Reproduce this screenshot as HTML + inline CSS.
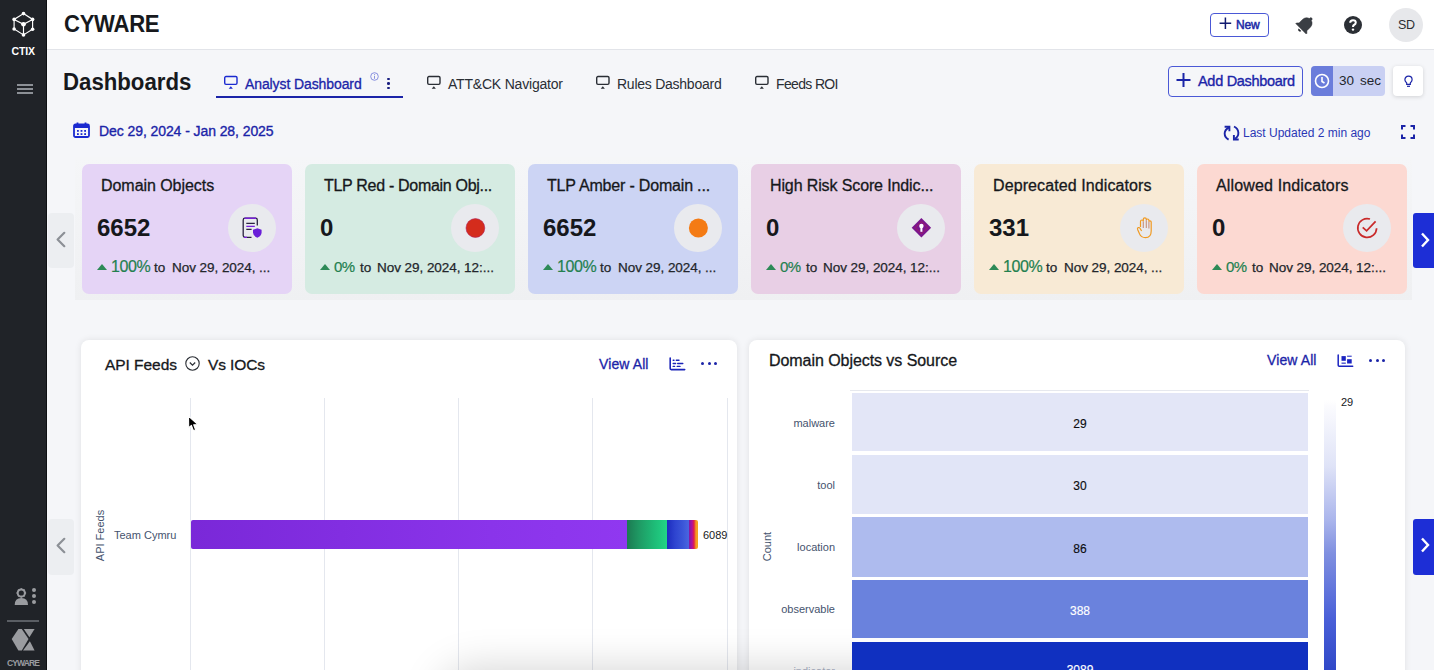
<!DOCTYPE html>
<html><head><meta charset="utf-8">
<style>
*{box-sizing:border-box;margin:0;padding:0}
html,body{width:1434px;height:670px;overflow:hidden;font-family:"Liberation Sans",sans-serif;background:#f5f6f9;color:#1f2328;position:relative}
.a{position:absolute}
.t{position:absolute;white-space:nowrap;line-height:1}
#sidebar{position:absolute;left:0;top:0;width:47px;height:670px;background:#202328;border-right:1px solid #0e1013}
#header{position:absolute;left:47px;top:0;width:1387px;height:50px;background:#fff;border-bottom:1px solid #e2e4e9}
.card{position:absolute;top:164px;width:210px;height:130px;border-radius:7px}
.card .ttl{position:absolute;left:19px;top:14px;font-size:16px;color:#16181c;white-space:nowrap;line-height:1;-webkit-text-stroke:0.3px #16181c}
.card .num{position:absolute;left:15px;top:52px;font-size:24px;font-weight:bold;color:#16181c;line-height:1}
.card .ic{position:absolute;left:146px;top:40px;width:48px;height:48px;border-radius:50%;background:#e9eaee}
.card .ic svg{position:absolute;left:0;top:0}
.card .tri{position:absolute;left:15px;top:100px;width:0;height:0;border-left:5px solid transparent;border-right:5px solid transparent;border-bottom:6px solid #2d8a57}
.card .pct{position:absolute;left:29px;top:95px;font-size:16px;color:#23804f;line-height:1;letter-spacing:-0.4px;white-space:nowrap;-webkit-text-stroke:0.2px #23804f}
.card .to{position:absolute;top:97px;font-size:13.5px;color:#23262b;line-height:1;white-space:nowrap;-webkit-text-stroke:0.25px #23262b}
.card .dt{position:absolute;top:97px;font-size:13.5px;color:#23262b;line-height:1;white-space:nowrap;letter-spacing:-0.05px;-webkit-text-stroke:0.25px #23262b}
.panel{position:absolute;top:340px;height:340px;width:656px;background:#fff;border-radius:8px;box-shadow:0 0 7px rgba(0,0,0,0.09)}
.grid{position:absolute;top:398px;width:1px;height:280px;background:#e4e7ee}
.lbl{position:absolute;font-size:11px;color:#45536e;white-space:nowrap;line-height:1}
.cell{position:absolute;left:852px;width:456px}
.val{position:absolute;left:0;width:456px;text-align:center;font-size:12px;line-height:1;color:#0c0d10;-webkit-text-stroke:0.15px currentColor}
</style></head><body>
<div id="sidebar">
  <svg class="a" style="left:12px;top:11px" width="23" height="26" viewBox="0 0 23 26">
    <g fill="none" stroke="#fff" stroke-width="1.15"><path d="M11.5 2.6 L20.6 8.4 L20.6 18.3 L11.5 23.9 L2.1 18 L2.1 8.4 Z"/><path d="M2.1 8.4 L11.5 13.3 L20.6 8.4 M11.5 13.3 L11.5 23.9"/></g>
    <g fill="#fff"><circle cx="11.5" cy="2.6" r="1.8"/><circle cx="20.6" cy="8.4" r="1.8"/><circle cx="20.6" cy="18.3" r="1.8"/><circle cx="11.5" cy="23.9" r="1.8"/><circle cx="2.1" cy="18" r="1.8"/><circle cx="2.1" cy="8.4" r="1.8"/><circle cx="11.5" cy="13.3" r="2.3"/></g>
  </svg>
  <div class="t" style="left:11.5px;top:46px;font-size:10.5px;font-weight:bold;color:#fff;letter-spacing:-0.1px">CTIX</div>
  <div class="a" style="left:17px;top:84px;width:16px;height:1.6px;background:#8c9096"></div>
  <div class="a" style="left:17px;top:88px;width:16px;height:1.6px;background:#8c9096"></div>
  <div class="a" style="left:17px;top:92px;width:16px;height:1.6px;background:#8c9096"></div>
  <svg class="a" style="left:12px;top:586px" width="26" height="20" viewBox="0 0 26 20">
    <g fill="#9a9ca0"><path d="M2.7 19 Q2.7 12 9.3 12 Q16 12 16 19 Z"/><circle cx="22" cy="4" r="2"/><circle cx="22" cy="10" r="2"/><circle cx="22" cy="16" r="2"/></g>
    <circle cx="9.3" cy="7" r="3.6" fill="none" stroke="#9a9ca0" stroke-width="2"/>
    <g stroke="#9a9ca0" stroke-width="1.5"><path d="M9.3 2.2 V3.5 M9.3 10.5 V11.8 M4.5 7 H5.8 M12.8 7 H14.1 M5.9 3.6 L6.8 4.5 M11.8 9.5 L12.7 10.4 M12.7 3.6 L11.8 4.5 M6.8 9.5 L5.9 10.4"/></g>
  </svg>
  <div class="a" style="left:7px;top:620px;width:32px;height:1.5px;background:#5a5e64"></div>
  <svg class="a" style="left:0;top:620px" width="47" height="40" viewBox="0 620 47 40"><g fill="#9a9ca0"><path d="M11.7 639.1 L18.4 629 L21.8 629 L28.5 639.1 L21.8 650.5 L18.4 650.5 Z"/><path d="M23.8 629 L34.6 629 L29.4 637.3 Z"/><path d="M29.9 641.3 L34.6 650.5 L23 650.5 Z"/></g></svg>
  <div class="t" style="left:7px;top:659px;font-size:8.5px;font-weight:bold;color:#9a9ca0;letter-spacing:-0.9px">CYWARE</div>
</div>

<div id="header">
  <div class="t" style="left:17px;top:13px;font-size:23.5px;font-weight:bold;color:#17191d;letter-spacing:-0.3px;transform:scaleX(0.94);transform-origin:0 0">CYWARE</div>
</div>
<!-- New button -->
<div class="a" style="left:1210px;top:13px;width:59px;height:24px;border:1px solid #4a58d6;border-radius:4px;background:#fff"></div>
<svg class="a" style="left:1218px;top:16px" width="15" height="15" viewBox="0 0 15 15"><path d="M7.4 1.6 V13 M1.6 7.3 H13.2" stroke="#101a70" stroke-width="1.5"/></svg>
<div class="t" style="left:1236px;top:19px;font-size:12px;color:#1b2aa6;letter-spacing:-0.15px;-webkit-text-stroke:0.5px #1b2aa6">New</div>
<!-- bell -->
<svg class="a" style="left:1290px;top:10px" width="30" height="30" viewBox="0 0 30 30"><g transform="translate(16.2 13.6) rotate(45) scale(0.92) translate(-12 -11)"><path d="M12 22.5c1.1 0 2-.9 2-2h-4c0 1.1.89 2 2 2z" fill="#23262b"/><path d="M18 16v-5c0-3.07-1.64-5.64-4.5-6.32V4c0-.83-.67-1.5-1.5-1.5s-1.5.67-1.5 1.5v.68C7.63 5.36 6 7.92 6 11v5l-2 2v1h16v-1l-2-2z" fill="#3a3e44" stroke="#23262b" stroke-width="0.5"/></g></svg>
<!-- help -->
<svg class="a" style="left:1344px;top:16px" width="18" height="18" viewBox="0 0 18 18">
  <circle cx="9" cy="9" r="9" fill="#2b2f35"/>
  <path d="M6.2 6.8 Q6.2 4.2 9 4.2 Q11.8 4.2 11.8 6.6 Q11.8 8.2 10 9 Q9 9.5 9 11" fill="none" stroke="#fff" stroke-width="2"/>
  <circle cx="9" cy="13.6" r="1.2" fill="#fff"/>
</svg>
<div class="a" style="left:1389px;top:8px;width:34px;height:34px;border-radius:50%;background:#e7e8eb"></div>
<div class="t" style="left:1398px;top:19px;font-size:12.5px;color:#2b2e33;letter-spacing:-0.4px">SD</div>

<!-- Title & tabs -->
<div class="t" style="left:63px;top:71px;font-size:23.5px;font-weight:bold;color:#17191d;letter-spacing:0px;transform:scaleX(0.945);transform-origin:0 0">Dashboards</div>

<svg class="a" style="left:222.5px;top:75px" width="16" height="15" viewBox="0 0 16 15"><rect x="1.7" y="1.5" width="12.3" height="7.9" rx="1.3" fill="none" stroke="#1b2ad0" stroke-width="1.4"/><path d="M5.7 13.8 L7.8 11.2 L9.9 13.8 Z" fill="#1b2ad0"/></svg>
<div class="t" style="left:245px;top:77px;font-size:14px;color:#1b24a8;letter-spacing:-0.1px;-webkit-text-stroke:0.3px #1b24a8">Analyst Dashboard</div>
<svg class="a" style="left:370px;top:72px" width="9" height="9" viewBox="0 0 9 9"><circle cx="4.5" cy="4.5" r="3.8" fill="none" stroke="#7d86dc" stroke-width="0.9"/><path d="M4.5 3.8 V6.8" stroke="#7d86dc" stroke-width="0.9"/><circle cx="4.6" cy="2.5" r="0.55" fill="#7d86dc"/></svg>
<div class="a" style="left:387.3px;top:77.5px;width:2.7px;height:2.7px;border-radius:50%;background:#1a1f80"></div>
<div class="a" style="left:387.3px;top:82.1px;width:2.7px;height:2.7px;border-radius:50%;background:#1a1f80"></div>
<div class="a" style="left:387.3px;top:86.7px;width:2.7px;height:2.7px;border-radius:50%;background:#1a1f80"></div>
<div class="a" style="left:216px;top:96px;width:187px;height:2px;background:#1b24a8"></div>

<svg class="a" style="left:426px;top:75px" width="16" height="15" viewBox="0 0 16 15"><rect x="1.7" y="1.5" width="12.3" height="7.9" rx="1.3" fill="none" stroke="#2a2e35" stroke-width="1.4"/><path d="M5.7 13.8 L7.8 11.2 L9.9 13.8 Z" fill="#2a2e35"/></svg>
<div class="t" style="left:448px;top:77px;font-size:14px;color:#2a2e35;letter-spacing:-0.2px">ATT&amp;CK Navigator</div>
<svg class="a" style="left:594.5px;top:75px" width="16" height="15" viewBox="0 0 16 15"><rect x="1.7" y="1.5" width="12.3" height="7.9" rx="1.3" fill="none" stroke="#2a2e35" stroke-width="1.4"/><path d="M5.7 13.8 L7.8 11.2 L9.9 13.8 Z" fill="#2a2e35"/></svg>
<div class="t" style="left:617px;top:77px;font-size:14px;color:#2a2e35;letter-spacing:-0.25px">Rules Dashboard</div>
<svg class="a" style="left:753.5px;top:75px" width="16" height="15" viewBox="0 0 16 15"><rect x="1.7" y="1.5" width="12.3" height="7.9" rx="1.3" fill="none" stroke="#2a2e35" stroke-width="1.4"/><path d="M5.7 13.8 L7.8 11.2 L9.9 13.8 Z" fill="#2a2e35"/></svg>
<div class="t" style="left:776px;top:77px;font-size:14px;color:#2a2e35;letter-spacing:-0.65px">Feeds ROI</div>

<!-- Right controls -->
<div class="a" style="left:1168px;top:66px;width:135px;height:31px;border:1px solid #4a58d6;border-radius:4px"></div>
<svg class="a" style="left:1176px;top:73px" width="15" height="14" viewBox="0 0 15 14"><path d="M7.5 0 V14 M0.5 7 H14.5" stroke="#1b24a8" stroke-width="2"/></svg>
<div class="t" style="left:1198px;top:74px;font-size:14.5px;color:#1b24a8;letter-spacing:-0.3px;-webkit-text-stroke:0.35px #1b24a8">Add Dashboard</div>

<div class="a" style="left:1311px;top:66px;width:74px;height:30px;border-radius:4px;background:#c9d0f3;overflow:hidden"><div class="a" style="left:0;top:0;width:22px;height:30px;background:#6b7ddb"></div></div>
<svg class="a" style="left:1314px;top:73px" width="16" height="16" viewBox="0 0 16 16"><circle cx="8" cy="8" r="6.5" fill="none" stroke="#fff" stroke-width="1.6"/><path d="M8 4 V8.5 L10.5 10" fill="none" stroke="#fff" stroke-width="1.6"/></svg>
<div class="t" style="left:1339px;top:74px;font-size:13.5px;color:#23262b">30</div><div class="t" style="left:1360px;top:74px;font-size:13.5px;color:#23262b">sec</div>

<div class="a" style="left:1393px;top:66px;width:30px;height:30px;border-radius:4px;background:#fff;box-shadow:0 1px 4px rgba(0,0,0,0.15)"></div>
<svg class="a" style="left:1403px;top:75px" width="11" height="13" viewBox="0 0 11 13"><path d="M5.5 1.2 C3.2 1.2 1.9 2.9 1.9 4.7 C1.9 6.3 2.9 7 3.7 8 V9.4 H7.3 V8 C8.1 7 9.1 6.3 9.1 4.7 C9.1 2.9 7.8 1.2 5.5 1.2 Z" fill="none" stroke="#1b24a8" stroke-width="1.2"/><path d="M4 11.3 H7" stroke="#1b24a8" stroke-width="1.2"/></svg>

<!-- Date row -->
<svg class="a" style="left:73px;top:122px" width="17" height="16" viewBox="0 0 17 16">
  <rect x="1" y="2.5" width="15" height="12.5" rx="1.5" fill="none" stroke="#1b2ad0" stroke-width="1.8"/>
  <rect x="1" y="2.5" width="15" height="3.5" fill="#1b2ad0"/>
  <path d="M4.5 0.5 V3 M12.5 0.5 V3" stroke="#1b2ad0" stroke-width="1.8"/>
  <g fill="#1b2ad0"><rect x="4" y="8" width="1.8" height="1.8"/><rect x="7.6" y="8" width="1.8" height="1.8"/><rect x="11.2" y="8" width="1.8" height="1.8"/><rect x="4" y="11.2" width="1.8" height="1.8"/><rect x="7.6" y="11.2" width="1.8" height="1.8"/><rect x="11.2" y="11.2" width="1.8" height="1.8"/></g>
</svg>
<div class="t" style="left:99px;top:124px;font-size:14px;color:#1b24a8;letter-spacing:-0.08px;-webkit-text-stroke:0.35px #1b24a8">Dec 29, 2024 - Jan 28, 2025</div>

<svg class="a" style="left:1220px;top:120px" width="25" height="25" viewBox="0 0 25 25">
  <path d="M8.9 7.3 C3.2 10.5 3.4 16.8 8.6 19.6" fill="none" stroke="#1b24a8" stroke-width="1.9"/>
  <path d="M4.6 6.7 H9.4 V11.2" fill="none" stroke="#1b24a8" stroke-width="1.9"/>
  <path d="M14 6.5 C19.6 9.2 19.7 16 14.9 18.9" fill="none" stroke="#1b24a8" stroke-width="1.9"/>
  <path d="M18.7 19.5 H13.9 V15" fill="none" stroke="#1b24a8" stroke-width="1.9"/>
</svg>
<div class="t" style="left:1243px;top:126.5px;font-size:12px;color:#2a36b5;letter-spacing:0px">Last Updated 2 min ago</div>
<svg class="a" style="left:1401px;top:125px" width="14" height="14" viewBox="0 0 14 14"><path d="M1 4.5 V1 H4.5 M9.5 1 H13 V4.5 M13 9.5 V13 H9.5 M4.5 13 H1 V9.5" fill="none" stroke="#1b24a8" stroke-width="2"/></svg>

<!-- cards container -->
<div class="a" style="left:75px;top:157px;width:1337px;height:143px;background:linear-gradient(180deg,#f5f6f8 0%,#f2f3f5 50%,#eff0f2 100%)"></div>
<div class="a" style="left:48px;top:213px;width:26px;height:55px;background:#eceef1;border-radius:4px"></div>
<svg class="a" style="left:55px;top:231px" width="12" height="17" viewBox="0 0 12 17"><path d="M9.3 1.8 L2.6 8.5 L9.3 15.2" fill="none" stroke="#8c9096" stroke-width="2.2" stroke-linecap="round" stroke-linejoin="round"/></svg>
<div class="a" style="left:1413px;top:213px;width:21px;height:55px;background:#1d2ed6;border-radius:3px 0 0 3px"></div>
<svg class="a" style="left:1419px;top:232px" width="12" height="16" viewBox="0 0 12 16"><path d="M3 1.5 L9 8 L3 14.5" fill="none" stroke="#fff" stroke-width="2.4"/></svg>

<div class="card" style="left:82px;background:#e5d4f6"><div class="ttl" style="letter-spacing:-0.05px">Domain Objects</div><div class="num">6652</div><div class="ic"><svg width="48" height="48" viewBox="0 0 48 48"><path d="M29.3 21.5 V16 Q29.3 14.2 27.5 14.2 H17 Q15.2 14.2 15.2 16 V31.5 Q15.2 33.3 17 33.3 H23.5" fill="none" stroke="#2a2340" stroke-width="1.3"/><path d="M16.5 14.2 H28" stroke="#7a1ee0" stroke-width="1.4"/><path d="M18.3 19.3 H26.8 M18.3 25.4 H23.6" stroke="#2a2340" stroke-width="1.3"/><path d="M18.3 22.4 H26.8 M16 33.3 H19" stroke="#7a1ee0" stroke-width="1.3"/><path d="M29.3 24.2 L33.6 25.8 V28.6 Q33.6 32 29.3 33.7 Q25 32 25 28.6 V25.8 Z" fill="#6a1fd8"/></svg></div><div class="tri"></div><div class="pct">100%</div><div class="to" style="left:72px">to</div><div class="dt" style="left:90px">Nov 29, 2024, ...</div></div>
<div class="card" style="left:305px;background:#d5ebe2"><div class="ttl" style="letter-spacing:-0.3px">TLP Red - Domain Obj...</div><div class="num">0</div><div class="ic"><svg width="48" height="48" viewBox="0 0 48 48"><circle cx="24.4" cy="24" r="9.4" fill="#d42c1c" stroke="#b0205a" stroke-width="0.6"/></svg></div><div class="tri"></div><div class="pct" style="letter-spacing:-0.6px;font-size:15px;top:95px">0%</div><div class="to" style="left:55px">to</div><div class="dt" style="left:72px">Nov 29, 2024, 12:...</div></div>
<div class="card" style="left:528px;background:#ccd4f4"><div class="ttl" style="letter-spacing:-0.18px">TLP Amber - Domain ...</div><div class="num">6652</div><div class="ic"><svg width="48" height="48" viewBox="0 0 48 48"><circle cx="24.4" cy="24" r="9.5" fill="#f47b14"/></svg></div><div class="tri"></div><div class="pct">100%</div><div class="to" style="left:72px">to</div><div class="dt" style="left:90px">Nov 29, 2024, ...</div></div>
<div class="card" style="left:751px;background:#e8cfe5"><div class="ttl" style="letter-spacing:-0.12px">High Risk Score Indic...</div><div class="num">0</div><div class="ic"><svg width="48" height="48" viewBox="0 0 48 48"><path d="M24.4 14 L34.1 23.7 L24.4 33.4 L14.7 23.7 Z" fill="#7a168e"/><path d="M24.4 17.5 L30.6 23.7 L24.4 29.9 L18.2 23.7 Z" fill="none" stroke="#a8205a" stroke-width="0.8"/><circle cx="24.4" cy="22" r="2.2" fill="#fff"/><rect x="23.4" y="22" width="2" height="5.8" fill="#fff"/></svg></div><div class="tri"></div><div class="pct" style="letter-spacing:-0.6px;font-size:15px;top:95px">0%</div><div class="to" style="left:55px">to</div><div class="dt" style="left:72px">Nov 29, 2024, 12:...</div></div>
<div class="card" style="left:974px;background:#f8ead5"><div class="ttl" style="letter-spacing:0.1px">Deprecated Indicators</div><div class="num">331</div><div class="ic"><svg width="48" height="48" viewBox="0 0 48 48"><path d="M20.5 23 V17.5 Q20.5 16 22 16 Q23.3 16 23.3 17.5 V15.3 Q23.3 13.8 24.8 13.8 Q26.3 13.8 26.3 15.3 V16.3 Q26.3 15 27.6 15 Q28.9 15 28.9 16.3 V17.8 Q28.9 16.8 30 16.8 Q31.2 16.8 31.2 18 V27 Q31.2 33.6 25.5 33.6 Q21 33.6 19.4 29.6 L17.6 25.5 Q17.1 24 18.2 23.6 Q19.4 23.2 20.3 24.7 L21.6 27" fill="none" stroke="#f09a22" stroke-width="1.2"/><path d="M23.3 17.5 V24 M26.3 16.3 V24 M28.9 17.8 V24.5" stroke="#c8907a" stroke-width="1.1"/></svg></div><div class="tri"></div><div class="pct">100%</div><div class="to" style="left:72px">to</div><div class="dt" style="left:90px">Nov 29, 2024, ...</div></div>
<div class="card" style="left:1197px;background:#fcd9d2"><div class="ttl" style="letter-spacing:0.15px">Allowed Indicators</div><div class="num">0</div><div class="ic"><svg width="48" height="48" viewBox="0 0 48 48"><path d="M27 15 A9.4 9.4 0 1 0 33.6 24.2" fill="none" stroke="#c92a2a" stroke-width="1.7"/><path d="M19.7 23.3 L23.6 26.9 L32.6 17.4" fill="none" stroke="#c92a2a" stroke-width="1.7"/></svg></div><div class="tri"></div><div class="pct" style="letter-spacing:-0.6px;font-size:15px;top:95px">0%</div><div class="to" style="left:55px">to</div><div class="dt" style="left:72px">Nov 29, 2024, 12:...</div></div>

<!-- panel row arrows -->
<div class="a" style="left:48px;top:519px;width:26px;height:56px;background:#eceef1;border-radius:4px"></div>
<svg class="a" style="left:55px;top:537px" width="12" height="17" viewBox="0 0 12 17"><path d="M9.3 1.8 L2.6 8.5 L9.3 15.2" fill="none" stroke="#8c9096" stroke-width="2.2" stroke-linecap="round" stroke-linejoin="round"/></svg>
<div class="a" style="left:1413px;top:519px;width:21px;height:56px;background:#1d2ed6;border-radius:3px 0 0 3px"></div>
<svg class="a" style="left:1419px;top:537px" width="12" height="16" viewBox="0 0 12 16"><path d="M3 1.5 L9 8 L3 14.5" fill="none" stroke="#fff" stroke-width="2.4"/></svg>

<!-- Left panel -->
<div class="panel" style="left:81px"></div>
<div class="t" style="left:105px;top:357px;font-size:15.5px;color:#16181c;letter-spacing:-0.05px;-webkit-text-stroke:0.3px #16181c">API Feeds</div>
<svg class="a" style="left:185px;top:356px" width="15" height="15" viewBox="0 0 15 15"><circle cx="7.5" cy="7.5" r="6.7" fill="none" stroke="#2b2f35" stroke-width="1.1"/><path d="M4.8 6.5 L7.5 9.2 L10.2 6.5" fill="none" stroke="#2b2f35" stroke-width="1.2"/></svg>
<div class="t" style="left:208px;top:357px;font-size:15.5px;color:#16181c;letter-spacing:-0.1px;-webkit-text-stroke:0.3px #16181c">Vs IOCs</div>
<div class="t" style="left:599px;top:357px;font-size:14px;color:#1b24a8;letter-spacing:0.1px;-webkit-text-stroke:0.3px #1b24a8">View All</div>
<svg class="a" style="left:664px;top:352px" width="26" height="22" viewBox="664 352 26 22"><path d="M670.2 358.1 V368.6 Q670.2 369.6 671.2 369.6 H684.7" fill="none" stroke="#1b24b8" stroke-width="1.6" stroke-linecap="round"/><path d="M673.2 360.2 H674 M676.3 360.2 H679 M673.2 363.5 H675.6 M677.7 363.5 H682.8 M673.2 366.4 H674.6 M677.2 366.4 H680" stroke="#1b24b8" stroke-width="1.4" stroke-linecap="round"/></svg>
<div class="a" style="left:701.2px;top:362.3px;width:3.2px;height:3.2px;border-radius:50%;background:#1b24a8"></div>
<div class="a" style="left:707.7px;top:362.3px;width:3.2px;height:3.2px;border-radius:50%;background:#1b24a8"></div>
<div class="a" style="left:714.2px;top:362.3px;width:3.2px;height:3.2px;border-radius:50%;background:#1b24a8"></div>

<div class="grid" style="left:190px"></div>
<div class="grid" style="left:324px"></div>
<div class="grid" style="left:458px"></div>
<div class="grid" style="left:592px"></div>
<div class="grid" style="left:727px"></div>
<div class="a" style="left:191px;top:520px;width:507px;height:29px;border-radius:2px;overflow:hidden;background:linear-gradient(90deg,#7a28d8 0px,#8a34ea 300px,#9038f0 436px,#1c7a52 436px,#1f9a64 448px,#1ebd78 464px,#22d486 476px,#1c2cbe 476px,#2e44d0 484px,#3b56d8 492px,#4a66e0 498px,#7a1aa8 498px,#b010a0 501px,#e0204a 503px,#f5a020 505px,#f5a020 507px)"></div>
<div class="lbl" style="left:114px;top:530px;color:#45536e">Team Cymru</div>
<div class="lbl" style="left:703px;top:530px;color:#16181c">6089</div>
<div class="lbl" style="left:74px;top:530px;transform:rotate(-90deg);transform-origin:center;width:52px;text-align:center">API Feeds</div>
<svg class="a" style="left:185px;top:413px" width="16" height="22" viewBox="0 0 16 22"><path d="M3.5 3 L3.7 15 L6.4 12.4 L8.4 17.6 L10.6 16.9 L8.7 11.8 L12.9 11.6 Z" fill="#000" stroke="#fff" stroke-width="1.1" stroke-linejoin="round"/></svg>

<!-- Right panel -->
<div class="panel" style="left:749px"></div>
<div class="a" style="left:450px;top:678px;width:600px;height:60px;border-radius:24px;background:#fff;box-shadow:0 0 40px 10px rgba(0,0,0,0.17)"></div>
<div class="t" style="left:769px;top:353px;font-size:16px;color:#16181c;letter-spacing:-0.06px;-webkit-text-stroke:0.3px #16181c">Domain Objects vs Source</div>
<div class="t" style="left:1267px;top:353px;font-size:14px;color:#1b24a8;letter-spacing:0.1px;-webkit-text-stroke:0.3px #1b24a8">View All</div>
<svg class="a" style="left:1332px;top:350px" width="26" height="22" viewBox="1332 350 26 22"><path d="M1338.2 354.9 V365.2 Q1338.2 366.25 1339.2 366.25 H1352.7" fill="none" stroke="#1b24c0" stroke-width="1.5" stroke-linecap="round"/><g fill="#1b24c0"><rect x="1341.5" y="356.1" width="4.3" height="4.7"/><rect x="1341.5" y="362.6" width="4.3" height="1.1"/><rect x="1347.1" y="355.7" width="4.6" height="1"/><rect x="1347.1" y="359.2" width="4.6" height="4.3"/></g></svg>
<div class="a" style="left:1369.2px;top:358.8px;width:3.2px;height:3.2px;border-radius:50%;background:#1b24a8"></div>
<div class="a" style="left:1375.7px;top:358.8px;width:3.2px;height:3.2px;border-radius:50%;background:#1b24a8"></div>
<div class="a" style="left:1382.2px;top:358.8px;width:3.2px;height:3.2px;border-radius:50%;background:#1b24a8"></div>

<div class="a" style="left:850px;top:390px;width:459px;height:1px;background:#e6e8ee"></div>
<div class="cell" style="top:393px;height:58px;background:#e3e6f7"><div class="val" style="top:24.5px">29</div></div>
<div class="cell" style="top:455px;height:59px;background:#e1e5f7"><div class="val" style="top:25px">30</div></div>
<div class="cell" style="top:517px;height:60px;background:#aebbee"><div class="val" style="top:25.5px">86</div></div>
<div class="cell" style="top:580px;height:58px;background:#6a82dd"><div class="val" style="top:24.5px;color:#fff">388</div></div>
<div class="cell" style="top:642px;height:40px;background:#1030c0"><div class="val" style="top:22px;color:#fff">3089</div></div>
<div class="lbl" style="left:780px;top:418px;width:55px;text-align:right">malware</div>
<div class="lbl" style="left:780px;top:480px;width:55px;text-align:right">tool</div>
<div class="lbl" style="left:780px;top:542px;width:55px;text-align:right">location</div>
<div class="lbl" style="left:760px;top:604px;width:75px;text-align:right">observable</div>
<div class="lbl" style="left:760px;top:666px;width:75px;text-align:right;color:#9aa2b3">indicator</div>
<div class="lbl" style="left:741px;top:541px;width:52px;text-align:center;transform:rotate(-90deg)">Count</div>
<div class="a" style="left:1324px;top:400px;width:12px;height:270px;background:linear-gradient(180deg,#fff 0px,#fbfbfe 6px,#dfe3f7 66px,#aab5ec 120px,#8090e0 153px,#4a60d8 218px,#3048c8 270px)"></div>
<div class="lbl" style="left:1341px;top:397px;color:#16181c">29</div>

<!-- bottom soft shadow -->
</body></html>
